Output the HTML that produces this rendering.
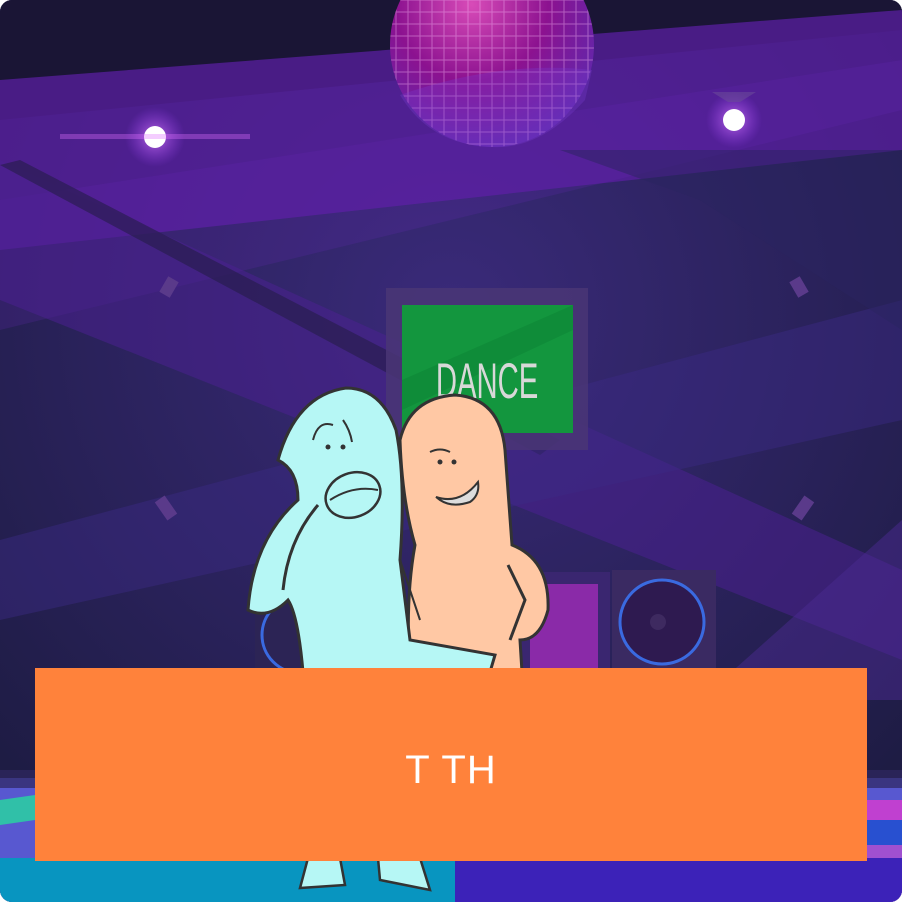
<!DOCTYPE html>
<html><head><meta charset="utf-8"><style>
html,body{margin:0;padding:0;background:#fff}
.wrap{width:902px;height:902px;position:relative;overflow:hidden;border-radius:12px;background:#1f1d45}
svg{position:absolute;left:0;top:0}
.box{position:absolute;left:35px;top:668px;width:832px;height:193px;background:#ff823b;display:flex;align-items:center;justify-content:center}
.box span{color:#fff;font-family:"Comic Sans MS","Liberation Sans",sans-serif;font-weight:normal;font-size:40px;letter-spacing:1px;margin-top:12px}
</style></head><body><div class="wrap">
<svg width="902" height="902" viewBox="0 0 902 902">
<defs>
<radialGradient id="g1" cx="0.5" cy="0.35" r="0.7"><stop offset="0" stop-color="#3a2a7a"/><stop offset="1" stop-color="#1e1c44"/></radialGradient>
<radialGradient id="ball" cx="0.4" cy="0.3" r="0.75"><stop offset="0" stop-color="#d84bb8"/><stop offset="0.5" stop-color="#8c1290"/><stop offset="1" stop-color="#5a2ab0"/></radialGradient>
<radialGradient id="glow"><stop offset="0" stop-color="#fff" stop-opacity="0.9"/><stop offset="0.3" stop-color="#d070ff" stop-opacity="0.5"/><stop offset="1" stop-color="#a040ff" stop-opacity="0"/></radialGradient>
<pattern id="tiles" width="12" height="12" patternUnits="userSpaceOnUse"><rect width="12" height="12" fill="none" stroke="#f0b0f0" stroke-opacity="0.45" stroke-width="1"/></pattern>
</defs>
<rect width="902" height="902" fill="url(#g1)"/>
<polygon points="0,0 902,0 902,30 0,120" fill="#1a1535"/>
<!-- beams -->
<polygon points="0,80 902,10 902,150 0,250" fill="#5a1fa0" opacity="0.75"/>
<polygon points="0,200 902,60 902,110 0,330" fill="#6a2ab8" opacity="0.2"/>
<polygon points="0,160 902,570 902,660 0,300" fill="#4a2090" opacity="0.55"/>
<polygon points="0,165 20,160 560,440 540,455" fill="#241c48" opacity="0.6"/>
<polygon points="902,300 902,420 0,620 0,540" fill="#3c2a86" opacity="0.45"/>
<polygon points="560,150 902,150 902,330 700,200" fill="#2a2460" opacity="0.5"/>
<polygon points="902,700 902,520 700,700" fill="#4a2a90" opacity="0.5"/>
<!-- ceiling lights -->
<circle cx="155" cy="137" r="30" fill="url(#glow)"/><circle cx="155" cy="137" r="11" fill="#fff"/>
<rect x="60" y="134" width="190" height="5" fill="#e070ff" opacity="0.35"/>
<circle cx="734" cy="120" r="28" fill="url(#glow)"/><circle cx="734" cy="120" r="11" fill="#fff"/>
<path d="M712 92 L756 92 L740 102 L728 102Z" fill="#6a4a9a" opacity="0.6"/>
<!-- disco ball -->
<circle cx="492" cy="45" r="102" fill="url(#ball)"/>
<circle cx="492" cy="45" r="102" fill="url(#tiles)"/>
<path d="M400 95 Q500 60 592 70 L585 100 Q540 150 492 147 Q430 145 400 95Z" fill="#7a3ad0" opacity="0.3"/>
<!-- wall bits -->
<rect x="163" y="278" width="12" height="18" fill="#5a3a8a" transform="rotate(30 169 287)"/>
<rect x="793" y="278" width="12" height="18" fill="#5a3a8a" transform="rotate(-30 799 287)"/>
<rect x="160" y="497" width="12" height="22" fill="#5a3a8a" transform="rotate(-35 166 508)"/>
<rect x="797" y="497" width="12" height="22" fill="#5a3a8a" transform="rotate(35 803 508)"/>
<!-- sign -->
<rect x="386" y="288" width="202" height="162" fill="#4a3676" opacity="0.85"/>
<rect x="402" y="305" width="171" height="128" fill="#13963e"/>
<polygon points="402,380 573,305 573,330 402,410" fill="#0a7a30" opacity="0.35"/>
<text x="487" y="398" text-anchor="middle" font-family="Liberation Sans,sans-serif" font-size="50" fill="#d8d8d8" transform="scale(0.82 1) translate(107 0)" textLength="125" lengthAdjust="spacingAndGlyphs">DANCE</text>
<!-- equipment -->
<rect x="255" y="575" width="60" height="95" fill="#2c2455"/>
<circle cx="300" cy="635" r="38" fill="none" stroke="#3a6ae0" stroke-width="3"/>
<rect x="518" y="572" width="92" height="100" fill="#3a2670"/>
<rect x="530" y="584" width="68" height="86" fill="#8a2aa8"/>
<rect x="612" y="570" width="104" height="102" fill="#3a2a62"/>
<circle cx="662" cy="622" r="42" fill="#2e1a50" stroke="#3a6ae0" stroke-width="3"/>
<circle cx="658" cy="622" r="8" fill="#3e2a60"/>
<!-- floor -->
<rect x="0" y="770" width="902" height="12" fill="#2a2458"/>
<rect x="0" y="780" width="902" height="122" fill="#5858d0"/>
<rect x="0" y="778" width="902" height="10" fill="#3a3580"/>
<polygon points="0,800 35,795 35,820 0,825" fill="#30c0a8"/>
<rect x="867" y="800" width="35" height="20" fill="#c040d0"/>
<rect x="867" y="820" width="35" height="25" fill="#2850d0"/>
<rect x="867" y="845" width="35" height="60" fill="#a050d0"/>
<rect x="0" y="858" width="455" height="44" fill="#0895c0"/>
<rect x="455" y="858" width="447" height="44" fill="#3c22b8"/>
<!-- peach character -->
<path d="M400 440 Q410 398 455 395 Q500 398 505 450 L512 545 Q550 560 548 610 Q540 640 520 640 L522 672 L410 672 Q405 600 415 545 Q402 500 400 440Z" fill="#ffc8a4" stroke="#333" stroke-width="3"/>
<path d="M430 452 Q440 447 450 452" fill="none" stroke="#333" stroke-width="2"/>
<circle cx="440" cy="462" r="2.5" fill="#333"/><circle cx="454" cy="462" r="2.5" fill="#333"/>
<path d="M436 497 Q460 505 478 482 Q480 495 470 502 Q452 508 440 500Z" fill="#ddd" stroke="#333" stroke-width="2"/>
<path d="M508 565 L525 600 L510 640" fill="none" stroke="#333" stroke-width="3"/>
<!-- blue character -->
<path d="M278 460 Q296 395 346 388 Q381 388 396 430 Q406 480 400 560 L410 640 L495 655 L490 672 L303 672 Q298 615 288 600 Q268 620 248 610 Q253 540 298 500 Q298 470 278 460Z" fill="#b6f7f5" stroke="#333" stroke-width="3"/>
<path d="M313 440 Q318 420 333 425" fill="none" stroke="#333" stroke-width="2"/>
<path d="M343 420 Q350 430 352 442" fill="none" stroke="#333" stroke-width="2"/>
<circle cx="328" cy="447" r="2.5" fill="#333"/><circle cx="343" cy="447" r="2.5" fill="#333"/>
<ellipse cx="353" cy="495" rx="28" ry="22" fill="#b6f7f5" stroke="#333" stroke-width="2.5" transform="rotate(-20 353 495)"/>
<path d="M330 500 Q353 485 378 490" fill="none" stroke="#333" stroke-width="2"/>
<path d="M283 590 Q288 540 318 505" fill="none" stroke="#333" stroke-width="3"/>
<path d="M400 560 L420 620" fill="none" stroke="#333" stroke-width="2"/>
<path d="M308 858 L300 888 L345 885 L340 858Z" fill="#b6f7f5" stroke="#333" stroke-width="2.5"/>
<path d="M378 858 L380 880 L430 890 L420 858Z" fill="#b6f7f5" stroke="#333" stroke-width="2.5"/>
</svg>
<div class="box"><span>T TH</span></div>
</div></body></html>
